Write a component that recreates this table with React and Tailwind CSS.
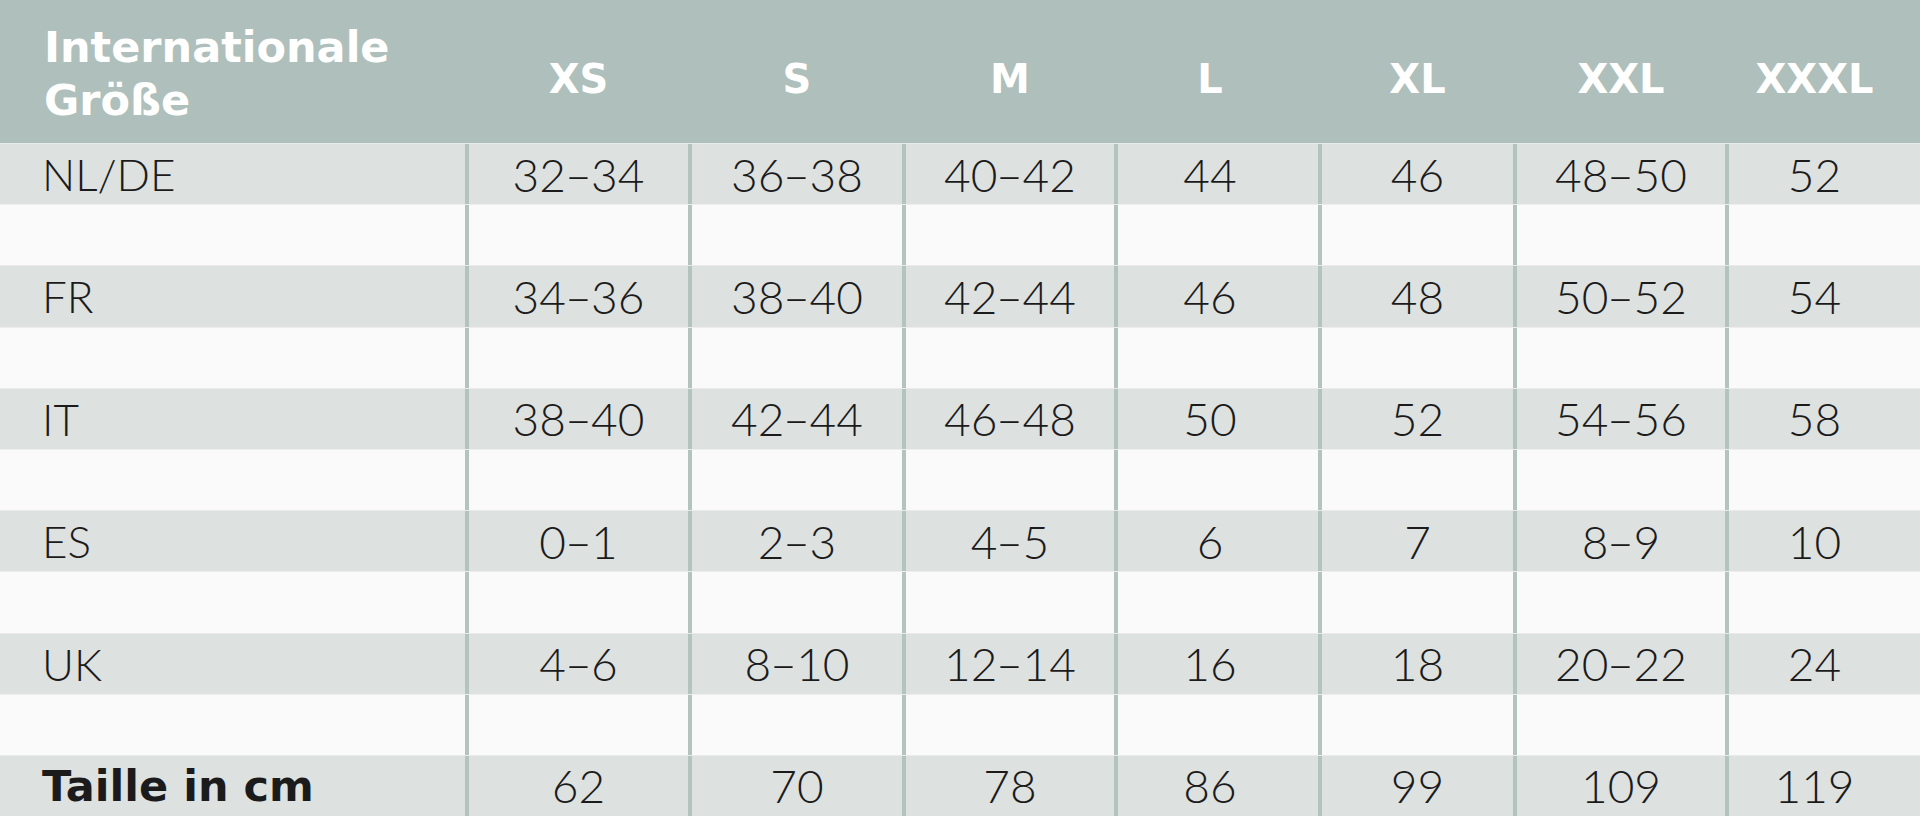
import React from "react";

const cols = ["XS", "S", "M", "L", "XL", "XXL", "XXXL"];
const widths = [
  "w-[223px]",
  "w-[214px]",
  "w-[212px]",
  "w-[204px]",
  "w-[195px]",
  "w-[212px]",
  "flex-1",
];
const pads = ["", "", "", " pr-[16px]", "", "", " pr-[20px]"];

const rows = [
  { label: "NL/DE", vals: ["32-34", "36-38", "40-42", "44", "46", "48-50", "52"] },
  { label: "FR", vals: ["34-36", "38-40", "42-44", "46", "48", "50-52", "54"] },
  { label: "IT", vals: ["38-40", "42-44", "46-48", "50", "52", "54-56", "58"] },
  { label: "ES", vals: ["0-1", "2-3", "4-5", "6", "7", "8-9", "10"] },
  { label: "UK", vals: ["4-6", "8-10", "12-14", "16", "18", "20-22", "24"] },
  { label: "Taille in cm", vals: ["62", "70", "78", "86", "99", "109", "119"], bold: true },
];

const bodyFont = { fontFamily: "Lato, 'Open Sans', sans-serif" };
const headFont = { fontFamily: "'DejaVu Sans', Verdana, sans-serif" };

function Value({ v }) {
  const parts = v.split("-");
  if (parts.length === 1) return <span>{v}</span>;
  return (
    <span>
      {parts[0]}
      <span className="inline-block scale-x-[1.7] mx-[4px]">-</span>
      {parts[1]}
    </span>
  );
}

function DataRow({ label, vals, bold }) {
  return (
    <div className="flex h-[61.2px] bg-[#dde1e0] border-t border-[#e8ebea]">
      <div
        className={
          "w-[465px] flex items-center pl-[42px] text-[#1b1b1b] " +
          (bold ? "font-bold text-[43px]" : "font-light text-[44px]")
        }
        style={bold ? headFont : bodyFont}
      >
        {label}
      </div>
      {vals.map((v, i) => (
        <div
          key={i}
          className={
            widths[i] +
            " flex items-center justify-center border-l-4 border-[#b3c3bf] text-[46px] font-light text-[#1b1b1b]" +
            pads[i]
          }
          style={bodyFont}
        >
          <Value v={v} />
        </div>
      ))}
    </div>
  );
}

function EmptyRow() {
  return (
    <div className="flex h-[61.2px] bg-[#fafafa] border-t border-[#ededed]">
      <div className="w-[465px]" />
      {widths.map((w, i) => (
        <div key={i} className={w + " border-l-4 border-[#b3c3bf]"} />
      ))}
    </div>
  );
}

export default function App() {
  return (
    <div className="w-[1920px] h-[823px] bg-white overflow-hidden">
      <div className="flex h-[143px] bg-[#afbfbb] text-white" style={headFont}>
        <div className="w-[465px] flex flex-col justify-center pl-[44px] pt-[4px] text-[43px] font-bold leading-[53px]">
          <span>Internationale</span>
          <span>Größe</span>
        </div>
        {cols.map((c, i) => (
          <div
            key={c}
            className={
              widths[i] +
              " flex items-center justify-center pl-[4px] pt-[14px] text-[40px] font-bold" +
              pads[i]
            }
          >
            {c}
          </div>
        ))}
      </div>
      {rows.map((r, i) => (
        <React.Fragment key={r.label}>
          <DataRow {...r} />
          {i < rows.length - 1 && <EmptyRow />}
        </React.Fragment>
      ))}
    </div>
  );
}
